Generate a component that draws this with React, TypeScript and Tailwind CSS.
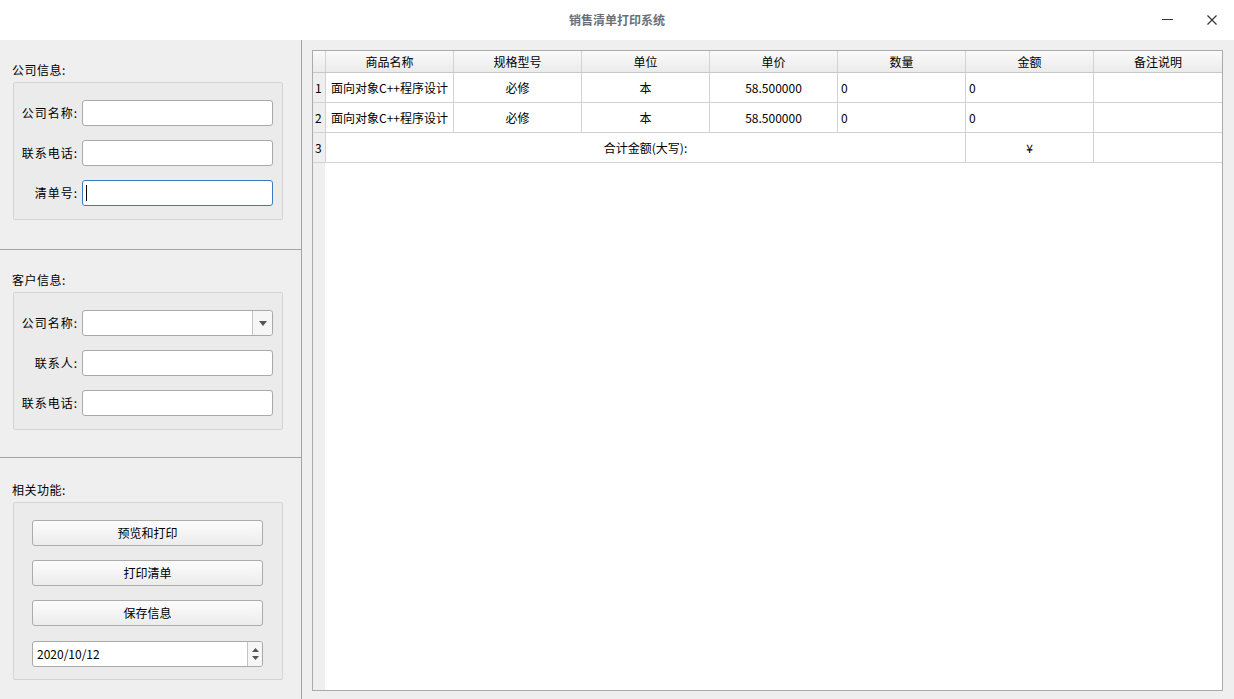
import React from "react";

const font = { fontFamily: '"Noto Sans CJK SC", "Noto Sans", sans-serif' };

function Field({ label, focused, combo }: { label: string; focused?: boolean; combo?: boolean }) {
  return (
    <div className="flex items-center h-[26px]">
      <div className="w-[64px] shrink-0 text-right text-[12px] text-black tracking-[1px]">{label}</div>
      <div
        className={
          "ml-[4px] w-[191px] shrink-0 h-[26px] bg-white rounded-[3px] flex items-center relative " +
          (focused ? "border border-[#3b7bbf]" : "border border-[#a9a9a9]")
        }
      >
        {focused && <div className="ml-[3px] w-[1px] h-[16px] bg-black" />}
        {combo && (
          <div className="absolute right-0 top-0 h-full w-[20px] border-l border-[#c4c4c4] flex items-center justify-center bg-[#f6f6f6] rounded-r-[3px]">
            <svg width="8" height="5" viewBox="0 0 8 5">
              <path d="M0 0 L8 0 L4 5 Z" fill="#555" />
            </svg>
          </div>
        )}
      </div>
    </div>
  );
}

function Btn({ text }: { text: string }) {
  return (
    <div className="w-[231px] h-[26px] rounded-[3px] border border-[#ababab] bg-gradient-to-b from-[#fcfcfc] to-[#ececec] flex items-center justify-center text-[12px] text-black">
      {text}
    </div>
  );
}

const cols = ["商品名称", "规格型号", "单位", "单价", "数量", "金额", "备注说明"];

function Cell({ children, align = "center", last }: { children?: React.ReactNode; align?: string; last?: boolean }) {
  return (
    <div
      className={
        "w-[128px] shrink-0 h-full flex items-center text-[12px] text-black " +
        (last ? "" : "border-r border-[#d2d2d2] ") +
        (align === "left" ? "justify-start pl-[5px]" : align === "left4" ? "justify-start pl-[3px]" : "justify-center")
      }
    >
      {children}
    </div>
  );
}

function RowHead({ n }: { n: number }) {
  return (
    <div className="w-[13px] shrink-0 h-full bg-[#efefef] border-r border-[#d2d2d2] flex items-center pl-[2px] text-[12px] text-black">
      {n}
    </div>
  );
}

export default function App() {
  return (
    <div className="w-[1234px] h-[699px] bg-[#efefef] flex flex-col overflow-hidden" style={font}>
      {/* title bar */}
      <div className="h-[40px] bg-white flex items-center relative shrink-0">
        <div className="flex-1 text-center text-[12px] font-bold text-[#67707c]">销售清单打印系统</div>
        <div className="absolute right-[61px] top-[19px] w-[11px] h-[1px] bg-[#333]" />
        <svg className="absolute right-[17px] top-[15px]" width="10" height="10" viewBox="0 0 10 10">
          <path d="M0.5 0.5 L9.5 9.5 M9.5 0.5 L0.5 9.5" stroke="#333" strokeWidth="1.2" />
        </svg>
      </div>

      <div className="flex flex-1 min-h-0">
        {/* left panel */}
        <div className="w-[302px] shrink-0 border-r border-[#a3a3a3] flex flex-col">
          {/* section 1 */}
          <div className="pl-[12px] pt-[22px] pb-[29px] border-b border-[#a3a3a3]">
            <div className="h-[16px] leading-[16px] text-[12px] text-black tracking-[0.5px]">公司信息:</div>
            <div className="mt-[4px] ml-[1px] w-[270px] border border-[#d4d4d4] bg-[#ebebeb] rounded-[2px] pt-[17px] pb-[13px] flex flex-col gap-[14px]">
              <Field label="公司名称:" />
              <Field label="联系电话:" />
              <Field label="清单号:" focused />
            </div>
          </div>
          {/* section 2 */}
          <div className="pl-[12px] pt-[22px] pb-[27px] border-b border-[#a3a3a3]">
            <div className="h-[16px] leading-[16px] text-[12px] text-black tracking-[0.5px]">客户信息:</div>
            <div className="mt-[4px] ml-[1px] w-[270px] border border-[#d4d4d4] bg-[#ebebeb] rounded-[2px] pt-[17px] pb-[13px] flex flex-col gap-[14px]">
              <Field label="公司名称:" combo />
              <Field label="联系人:" />
              <Field label="联系电话:" />
            </div>
          </div>
          {/* section 3 */}
          <div className="pl-[12px] pt-[24px]">
            <div className="h-[16px] leading-[16px] text-[12px] text-black tracking-[0.5px]">相关功能:</div>
            <div className="mt-[4px] ml-[1px] w-[270px] border border-[#d4d4d4] bg-[#ebebeb] rounded-[2px] pt-[17px] pb-[12px] pl-[18px] flex flex-col">
              <div className="flex flex-col gap-[14px]">
                <Btn text="预览和打印" />
                <Btn text="打印清单" />
                <Btn text="保存信息" />
              </div>
              <div className="mt-[15px] w-[231px] h-[26px] bg-white border border-[#a9a9a9] rounded-[3px] flex items-center relative">
                <span className="pl-[4px] text-[12px] text-black">2020/10/12</span>
                <div className="absolute right-0 top-0 h-full w-[15px] border-l border-[#c4c4c4] flex flex-col items-center justify-center gap-[4px] bg-[#f6f6f6] rounded-r-[3px]">
                  <svg width="7" height="4" viewBox="0 0 7 4">
                    <path d="M0 4 L7 4 L3.5 0 Z" fill="#555" />
                  </svg>
                  <svg width="7" height="4" viewBox="0 0 7 4">
                    <path d="M0 0 L7 0 L3.5 4 Z" fill="#555" />
                  </svg>
                </div>
              </div>
            </div>
          </div>
        </div>

        {/* right panel */}
        <div className="flex-1 pl-[10px] pt-[10px] pr-[11px] pb-[8px] flex">
          <div className="flex-1 border border-[#ababab] bg-white flex flex-col relative">
            {/* header */}
            <div className="h-[22px] flex border-b border-[#c8c8c8] bg-gradient-to-b from-[#fafafa] to-[#ebebeb] shrink-0">
              <div className="w-[13px] shrink-0 h-full border-r border-[#d2d2d2]" />
              {cols.map((c, i) => (
                <div
                  key={c}
                  className={
                    "w-[128px] shrink-0 h-full flex items-center justify-center text-[12px] text-black " +
                    (i < cols.length - 1 ? "border-r border-[#d2d2d2]" : "")
                  }
                >
                  {c}
                </div>
              ))}
            </div>
            {[1, 2].map((n) => (
              <div key={n} className="h-[30px] flex border-b border-[#d2d2d2] shrink-0">
                <RowHead n={n} />
                <Cell align="left">面向对象C++程序设计</Cell>
                <Cell>必修</Cell>
                <Cell>本</Cell>
                <Cell>58.500000</Cell>
                <Cell align="left4">0</Cell>
                <Cell align="left4">0</Cell>
                <Cell last />
              </div>
            ))}
            <div className="h-[30px] flex border-b border-[#d2d2d2] shrink-0">
              <RowHead n={3} />
              <div className="w-[640px] shrink-0 h-full border-r border-[#d2d2d2] flex items-center justify-center text-[12px] text-black">
                合计金额(大写):
              </div>
              <Cell>¥</Cell>
              <Cell last />
            </div>
            <div className="flex-1 flex">
              <div className="w-[12px] bg-[#efefef]" />
              <div className="flex-1" />
            </div>
          </div>
        </div>
      </div>
    </div>
  );
}
